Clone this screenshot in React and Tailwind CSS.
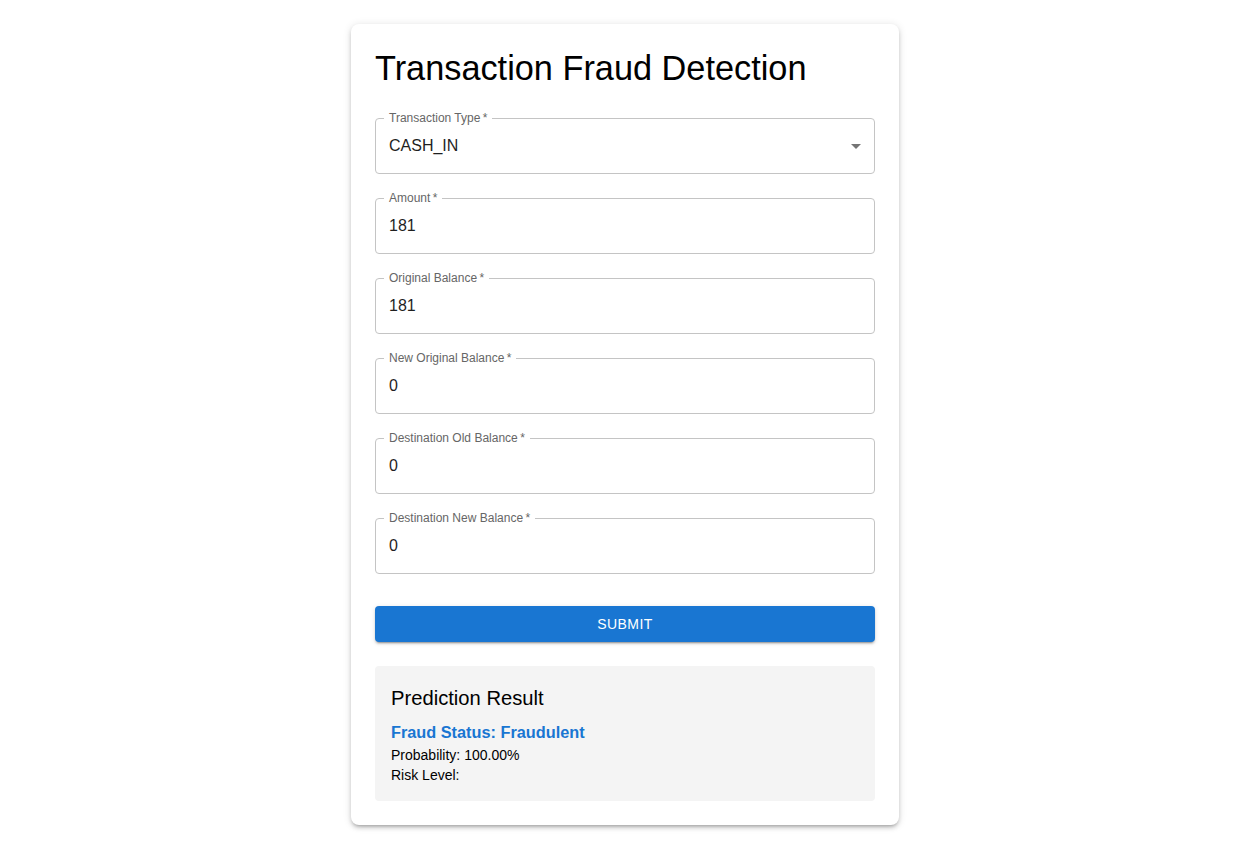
import React from "react";

const font = { fontFamily: '"Liberation Sans", Arial, Helvetica, sans-serif' };

function Field({ label, value, select }) {
  return (
    <div className="mt-4 mb-2">
      <div className="relative h-[56px] rounded-[4px] border border-[#c4c4c4] flex items-center pl-[13px] pr-[13px]">
        <span className="absolute left-[8px] top-[-9px] bg-white px-[5px] text-[12px] leading-[16px] text-[#666666]">
          {label}
          {"\u2009*"}
        </span>
        <span className="text-[16px] leading-[23px] text-[#1f1f1f] flex-1 -mt-[2px]">{value}</span>
        {select && (
          <svg
            className="absolute right-[6px] top-1/2 -translate-y-1/2"
            width="24"
            height="24"
            viewBox="0 0 24 24"
            fill="rgba(0,0,0,0.54)"
          >
            <path d="M7 10l5 5 5-5z" />
          </svg>
        )}
      </div>
    </div>
  );
}

export default function App() {
  return (
    <div className="min-h-[852px] bg-white flex justify-center pr-2" style={font}>
      <div className="mt-6 mb-6 w-[548px] self-start bg-white rounded-[8px] p-6 flex flex-col shadow-[0px_3px_3px_-2px_rgba(0,0,0,0.2),0px_3px_4px_0px_rgba(0,0,0,0.14),0px_1px_8px_0px_rgba(0,0,0,0.12)]">
        <h1 className="text-[34.3px] leading-[40px] pb-[2px] text-black mb-[12px] font-normal">
          Transaction Fraud Detection
        </h1>
        <Field label="Transaction Type" value="CASH_IN" select />
        <Field label="Amount" value="181" />
        <Field label="Original Balance" value="181" />
        <Field label="New Original Balance" value="0" />
        <Field label="Destination Old Balance" value="0" />
        <Field label="Destination New Balance" value="0" />
        <button className="mt-6 w-full h-[36px] rounded-[4px] bg-[#1976d2] text-white text-[14px] font-medium uppercase tracking-[0.4px] shadow-[0px_3px_1px_-2px_rgba(0,0,0,0.2),0px_2px_2px_0px_rgba(0,0,0,0.14),0px_1px_5px_0px_rgba(0,0,0,0.12)]">
          Submit
        </button>
        <div className="mt-6 rounded-[4px] bg-[#f4f4f4] p-4">
          <div className="text-[20.2px] leading-[32px] text-black mb-[7px]">Prediction Result</div>
          <div className="text-[16.3px] leading-[22px] mb-[2px] font-bold text-[#1976d2]">
            Fraud Status: Fraudulent
          </div>
          <div className="text-[14px] leading-[20px] text-black">Probability: 100.00%</div>
          <div className="text-[14px] leading-[20px] text-black">Risk Level: </div>
        </div>
      </div>
    </div>
  );
}
